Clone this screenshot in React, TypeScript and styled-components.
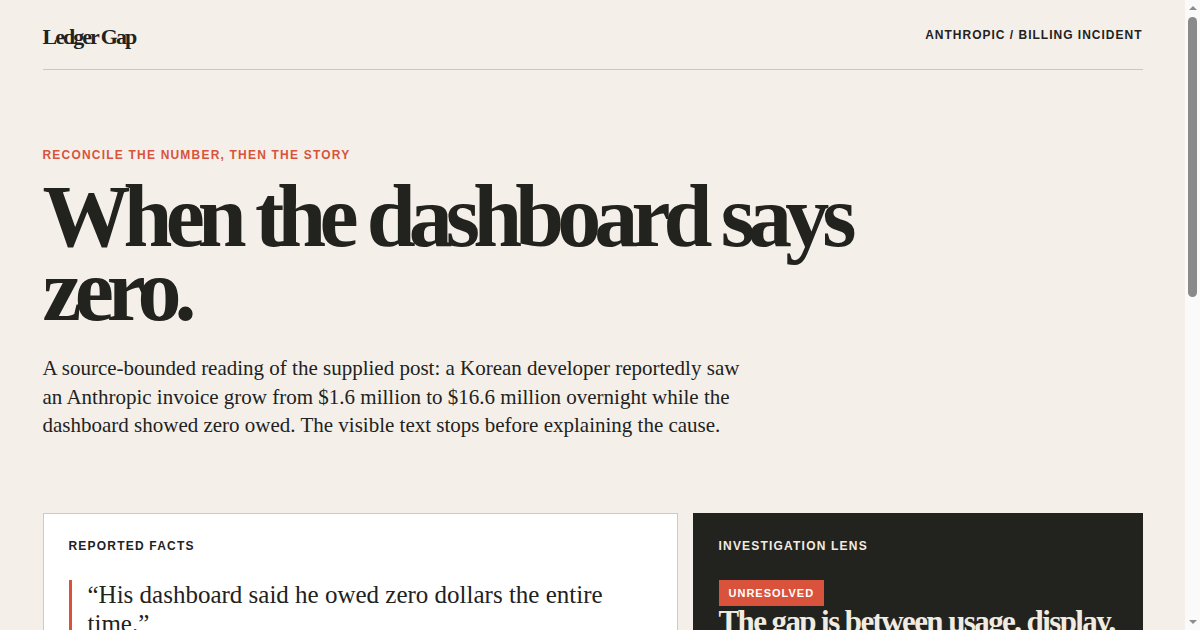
import React from 'react';
import styled, { createGlobalStyle } from 'styled-components';

const serif = `"Liberation Serif", "Times New Roman", serif`;
const sans = `"Liberation Sans", Arial, sans-serif`;

const GlobalStyle = createGlobalStyle`
  html, body {
    margin: 0;
    padding: 0;
    height: 100%;
    overflow: hidden;
    background: #f4f0e9;
    color: #22221e;
  }
  * { box-sizing: border-box; }
`;

const Frame = styled.div`
  display: flex;
  height: 100vh;
`;

const Main = styled.main`
  flex: 1;
  min-width: 0;
  overflow: hidden;
  background: #f4f0e9;
`;

// Classic scrollbar rail drawn beside the document
const Rail = styled.div`
  width: 15px;
  flex: none;
  display: flex;
  flex-direction: column;
  align-items: center;
  background: #fafafa;
  padding: 6px 0 6px;
`;

const Arrow = styled.span<{ $down?: boolean }>`
  width: 0;
  height: 0;
  border-left: 4.5px solid transparent;
  border-right: 4.5px solid transparent;
  ${(p) =>
    p.$down ? 'border-top: 4px solid #8c8c8c;' : 'border-bottom: 4px solid #8c8c8c;'}
`;

const Thumb = styled.span`
  width: 9px;
  height: 280px;
  margin-top: 7px;
  border-radius: 5px;
  background: #8a8a8a;
`;

const Spacer = styled.span`
  flex: 1;
`;

const Page = styled.div`
  max-width: 1100px;
  margin: 0 auto;
  padding-bottom: 140px;
`;

const Masthead = styled.header`
  display: flex;
  justify-content: space-between;
  align-items: flex-start;
  padding: 24px 0 19px;
  border-bottom: 1px solid #cbc7ba;
`;

const Logo = styled.div`
  font-family: ${serif};
  font-weight: 700;
  font-size: 22px;
  line-height: 26px;
  letter-spacing: -2px;
`;

const Kicker = styled.div<{ $tone?: string }>`
  font-family: ${sans};
  font-weight: 700;
  font-size: 12px;
  letter-spacing: 1.2px;
  text-transform: uppercase;
  color: ${(p) => p.$tone ?? '#22221e'};
`;

const TopKicker = styled(Kicker)`
  line-height: 22px;
  letter-spacing: 1px;
`;

const Hero = styled.section`
  padding-top: 78px;
`;

const Headline = styled.h1`
  margin: 18px 0 0;
  font-family: ${serif};
  font-weight: 700;
  font-size: 88px;
  line-height: 74px;
  letter-spacing: -6.9px;
  max-width: 860px;
`;

const Lede = styled.p`
  margin: 26px 0 0;
  max-width: 720px;
  font-family: ${serif};
  font-size: 21px;
  line-height: 28.6px;
  color: #22221e;
`;

const Cards = styled.div`
  display: grid;
  grid-template-columns: 635fr 450fr;
  gap: 15px;
  margin-top: 73px;
`;

const Card = styled.article<{ $dark?: boolean }>`
  padding: 25px 25px 32px;
  border: 1px solid ${(p) => (p.$dark ? '#22221e' : '#cfcbbf')};
  background: ${(p) => (p.$dark ? '#22221e' : '#ffffff')};
  color: ${(p) => (p.$dark ? '#f1ece2' : '#22221e')};
`;

const Quote = styled.blockquote`
  margin: 27px 0 0;
  padding: 0 0 0 16px;
  border-left: 3px solid #d9533c;
  font-family: ${serif};
  font-size: 25px;
  line-height: 29px;
`;

const Facts = styled.ul`
  list-style: none;
  margin: 22px 0 0;
  padding: 0;
  display: flex;
  flex-direction: column;
  gap: 12px;
`;

const Fact = styled.li`
  display: flex;
  justify-content: space-between;
  gap: 16px;
  padding-bottom: 12px;
  border-bottom: 1px solid #e4e0d6;
  font-family: ${serif};
  font-size: 18px;
`;

const FactValue = styled.span`
  font-family: ${sans};
  font-weight: 700;
  font-size: 15px;
`;

const Badge = styled.span`
  display: inline-block;
  margin-top: 27px;
  padding: 0 10px;
  height: 26px;
  line-height: 26px;
  background: #d9533c;
  color: #fff;
  font-family: ${sans};
  font-weight: 700;
  font-size: 11px;
  letter-spacing: 1px;
`;

const LensTitle = styled.h2`
  margin: 0;
  font-family: ${serif};
  font-weight: 700;
  font-size: 31px;
  line-height: 32px;
  letter-spacing: -1.6px;
`;

const LensText = styled.p`
  margin: 16px 0 0;
  font-family: ${serif};
  font-size: 18px;
  line-height: 26px;
  color: #cfc9bd;
`;

const facts = [
  ['Invoice before', '$1.6M'],
  ['Invoice after', '$16.6M'],
  ['Dashboard balance', '$0'],
  ['Stated cause', 'Not in text'],
];

export default function App() {
  return (
    <>
      <GlobalStyle />
      <Frame>
        <Main>
          <Page>
            <Masthead>
              <Logo>Ledger Gap</Logo>
              <TopKicker>Anthropic / Billing Incident</TopKicker>
            </Masthead>

            <Hero>
              <Kicker $tone="#d9533c">Reconcile the number, then the story</Kicker>
              <Headline>When the dashboard says zero.</Headline>
              <Lede>
                A source-bounded reading of the supplied post: a Korean developer reportedly saw
                an Anthropic invoice grow from $1.6 million to $16.6 million overnight while the
                dashboard showed zero owed. The visible text stops before explaining the cause.
              </Lede>
            </Hero>

            <Cards>
              <Card>
                <Kicker>Reported facts</Kicker>
                <Quote>“His dashboard said he owed zero dollars the entire time.”</Quote>
                <Facts>
                  {facts.map(([label, value]) => (
                    <Fact key={label}>
                      <span>{label}</span>
                      <FactValue>{value}</FactValue>
                    </Fact>
                  ))}
                </Facts>
              </Card>
              <Card $dark>
                <Kicker $tone="#f1ece2">Investigation lens</Kicker>
                <Badge>UNRESOLVED</Badge>
                <LensTitle>The gap is between usage, display, and invoice.</LensTitle>
                <LensText>
                  Metering, dashboard rendering and invoice generation are separate systems.
                  Until one of them is named, the cause remains an open question.
                </LensText>
              </Card>
            </Cards>
          </Page>
        </Main>
        <Rail aria-hidden>
          <Arrow />
          <Thumb />
          <Spacer />
          <Arrow $down />
        </Rail>
      </Frame>
    </>
  );
}
